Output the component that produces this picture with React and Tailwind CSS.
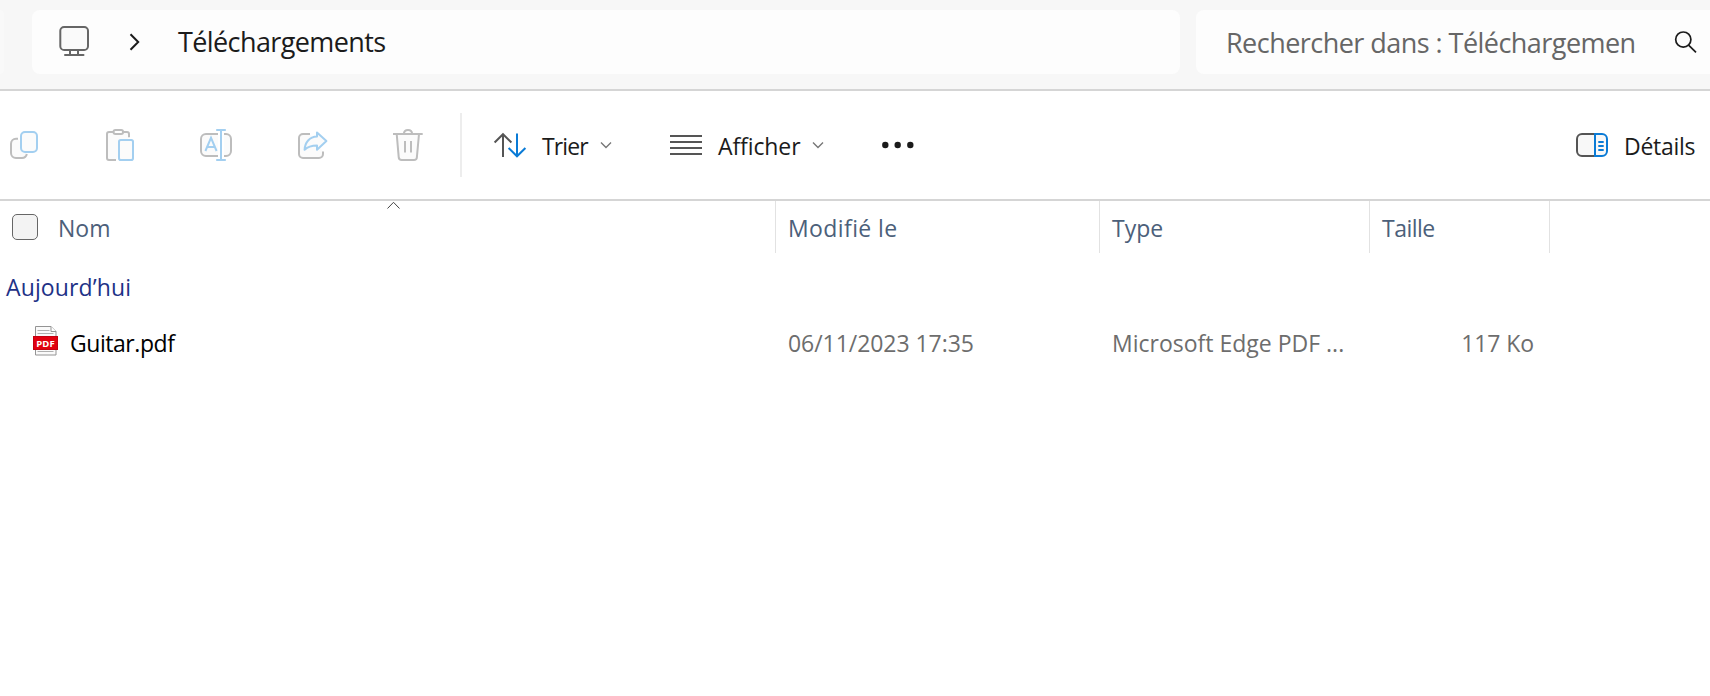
const GRAY = "#bdbdbd";
const BLUE = "#a3cff0";
const SOFT = "#fbfbfb";

function Icon({ children, className = "" }) {
  return (
    <svg width="36" height="36" viewBox="0 0 36 36" fill="none" strokeWidth="2" className={`block shrink-0 ${className}`}>
      {children}
    </svg>
  );
}

function CopyIcon() {
  return (
    <Icon>
      <path d="M12 11.8H10a5 5 0 0 0-5 5V26a5 5 0 0 0 5 5h6a5 5 0 0 0 4.8-4" stroke={GRAY} fill={SOFT} />
      <rect x="15" y="5" width="16" height="20" rx="4" stroke={BLUE} fill={SOFT} />
    </Icon>
  );
}

function PasteIcon() {
  return (
    <Icon>
      <path d="M14 33H7a2 2 0 0 1-2-2V7a2 2 0 0 1 2-2h18a2 2 0 0 1 2 2v3.2" stroke={GRAY} fill={SOFT} />
      <rect x="11.5" y="3" width="9.6" height="4" rx="2" stroke={GRAY} fill="#fff" />
      <rect x="17" y="13" width="14" height="20" rx="1.8" stroke={BLUE} fill={SOFT} />
    </Icon>
  );
}

function RenameIcon() {
  return (
    <Icon>
      <path d="M20 7H8a5 5 0 0 0-5 5v12a5 5 0 0 0 5 5h12M26 7h2a5 5 0 0 1 5 5v12a5 5 0 0 1-5 5h-2" stroke={GRAY} fill={SOFT} />
      <path d="M18.2 3h9.6M23 3v30M18.2 33h9.6M7.4 24L13 10.8 18.6 24M9.3 20h7.4" stroke={BLUE} />
    </Icon>
  );
}

function ShareIcon() {
  return (
    <Icon>
      <path d="M16 7H9a4 4 0 0 0-4 4v16a4 4 0 0 0 4 4h16a4 4 0 0 0 4-4v-2.6" stroke={GRAY} fill={SOFT} />
      <path d="M23 5.5L32.4 14 23 22.8V18.4c-5.6 0-9.4 1.3-12.4 4.3C11 15.2 15.5 9.9 23 9.6Z" stroke={BLUE} fill={SOFT} strokeLinejoin="round" />
    </Icon>
  );
}

function TrashIcon() {
  return (
    <Icon>
      <path d="M6.7 7l2 23.2A3 3 0 0 0 11.7 33h12.2a3 3 0 0 0 3-2.8L29 7" stroke={GRAY} fill={SOFT} />
      <path d="M3 7h29.7M13.8 7c.4-5.3 8-5.3 8.4 0M15 14v11.5M21 14v11.5" stroke={GRAY} />
    </Icon>
  );
}

function SortIcon() {
  return (
    <Icon className="ml-[30px]">
      <path d="M11 30V7M2.6 15.5L11 7.2l8.4 8.3" stroke="#555" />
      <path d="M25 6.5V29.5M16.6 21L25 29.3l8.4-8.3" stroke="#0a7bd6" />
    </Icon>
  );
}

function Chevron() {
  return (
    <svg width="12" height="8" viewBox="0 0 12 8" fill="none" className="block shrink-0">
      <path d="M1 1.4L6 6.4l5-5" stroke="#777" strokeWidth="1.4" />
    </svg>
  );
}

function PdfIcon() {
  return (
    <svg width="26" height="30" viewBox="0 0 26 30" className="mb-1 block shrink-0">
      <path d="M2.5 .5h15.5l5 5v23.5h-20.5z" fill="#fafafa" stroke="#949494" />
      <path d="M18 .5v5h5" fill="#fff" stroke="#949494" />
      <path d="M4.5 4.5h12M4.5 7.5h16M4.5 25.5h16" stroke="#b0b0b0" />
      <rect x="0" y="10" width="25" height="14" fill="#e1000f" />
      <rect x=".5" y="10.5" width="24" height="13" fill="none" stroke="#c40010" />
      <text x="12.5" y="20.5" textAnchor="middle" fill="#fff" fontSize="9.5" fontWeight="700" fontFamily="Open Sans, sans-serif" textLength="18.5">PDF</text>
    </svg>
  );
}

export default function App() {
  return (
    <div className="flex h-[696px] w-full flex-col overflow-hidden bg-white font-['Open_Sans','Noto_Sans',sans-serif] text-[23px] text-[#1b1b1b]">
      <header className="flex h-[91px] shrink-0 border-b-2 border-[#d5d5d5] bg-[#f7f7f7] pt-[10px]">
        <div className="mr-7 h-16 w-1 shrink-0 rounded-r-lg bg-[#f9f9f9]" />
        <div className="flex h-16 w-[1148px] shrink-0 items-center rounded-lg bg-[#fdfdfd] text-[27px]">
          <svg width="32" height="32" viewBox="0 0 32 32" fill="none" stroke="#666" strokeWidth="2" className="ml-[26px] block">
            <rect x="2.3" y="1" width="27.7" height="23" rx="3.8" fill="#fafafa" />
            <path d="M7 29h18.5M12 24v5M20 24v5" strokeLinecap="round" />
          </svg>
          <svg width="12" height="18" viewBox="0 0 12 18" fill="none" stroke="#1b1b1b" strokeWidth="2" className="ml-[39px] block">
            <path d="M1.5 1.3L9.2 9l-7.7 7.7" />
          </svg>
          <span className="ml-[37px] pt-px tracking-[-0.6px]">Téléchargements</span>
        </div>
        <div className="ml-4 flex h-16 flex-1 items-center rounded-l-lg bg-[#fdfdfd] text-[27px]">
          <div className="ml-[30px] w-[413px] whitespace-nowrap pt-[3px] tracking-[-0.54px] text-[#666]">Rechercher dans : Téléchargemen</div>
          <svg width="24" height="24" viewBox="0 0 24 24" fill="none" stroke="#1b1b1b" strokeWidth="1.7" className="ml-[35px] block shrink-0">
            <circle cx="9.3" cy="9.6" r="7.6" />
            <path d="M14.6 15.2L22 22.4" />
          </svg>
        </div>
      </header>

      <div className="flex h-[110px] shrink-0 items-center border-b-2 border-[#d5d5d5] pl-[6px]">
        <div className="flex gap-[60px]">
          <CopyIcon />
          <PasteIcon />
          <RenameIcon />
          <ShareIcon />
          <TrashIcon />
        </div>
        <div className="ml-[34px] h-16 w-[2px] bg-[#ededed]" />
        <SortIcon />
        <span className="ml-[14px] w-[58px] pt-[2px] tracking-[-0.9px]">Trier</span>
        <Chevron />
        <svg width="32" height="20" viewBox="0 0 32 20" stroke="#555" strokeWidth="2" className="ml-[58px] block">
          <path d="M0 1h32M0 7h32M0 13h32M0 19h32" />
        </svg>
        <span className="ml-[16px] w-[94px] pt-[2px] tracking-[-0.1px]">Afficher</span>
        <Chevron />
        <svg width="34" height="8" viewBox="0 0 34 8" fill="#1b1b1b" className="ml-[57px] block">
          <circle cx="4.3" cy="4" r="3.2" />
          <circle cx="16.7" cy="4" r="3.2" />
          <circle cx="29.3" cy="4" r="3.2" />
        </svg>
        <svg width="32" height="24" viewBox="0 0 32 24" fill="none" strokeWidth="2" className="ml-auto block">
          <path d="M19 1H6a5 5 0 0 0-5 5v12a5 5 0 0 0 5 5h13" stroke="#555" fill="#f8f8f8" />
          <path d="M19 1h7a5 5 0 0 1 5 5v12a5 5 0 0 1-5 5h-7z" stroke="#0a7bd6" fill="#f8f8f8" />
          <path d="M22.3 9h5.4M22.3 13h5.4M22.3 17h5.4" stroke="#0a7bd6" />
        </svg>
        <span className="ml-[16px] w-[86px] pt-[2px] tracking-[-0.3px]">Détails</span>
      </div>

      <div className="flex h-[52px] shrink-0 text-[#4c607a]">
        <div className="relative flex w-[776px] items-center border-r border-[#e2e2e2] pl-3">
          <svg width="14" height="8" viewBox="0 0 14 8" fill="none" stroke="#444" className="absolute left-[387px] top-0">
            <path d="M.5 7.5L6.5 1.3 12.5 7.5" />
          </svg>
          <span className="h-[26px] w-[26px] rounded-[5px] border-[1.5px] border-[#666] bg-[#f3f3f3]" />
          <span className="ml-[20px] pt-[2px]">Nom</span>
        </div>
        <div className="flex w-[324px] items-center border-r border-[#e2e2e2] pl-[12px] pt-[2px] tracking-[0.4px]">Modifié le</div>
        <div className="flex w-[270px] items-center border-r border-[#e2e2e2] pl-[12px] pt-[2px]">Type</div>
        <div className="flex w-[180px] items-center border-r border-[#e2e2e2] pl-[12px] pt-[2px] tracking-[-0.5px]">Taille</div>
      </div>

      <div className="flex h-[62px] shrink-0 items-center pl-[6px] pt-[7px] tracking-[0.12px] text-[#1e3287]">Aujourd’hui</div>

      <div className="flex h-[56px] shrink-0 items-center text-[#6d6d6d]">
        <div className="flex w-[776px] items-center pl-[33px]">
          <PdfIcon />
          <span className="ml-[11px] tracking-[-0.45px] text-black">Guitar.pdf</span>
        </div>
        <div className="w-[324px] pl-[12px] tracking-[-0.05px]">06/11/2023 17:35</div>
        <div className="w-[270px] whitespace-nowrap pl-[12px] tracking-[0px]">Microsoft Edge PDF ...</div>
        <div className="w-[164px] text-right tracking-[-0.1px]">117 Ko</div>
      </div>
    </div>
  );
}
